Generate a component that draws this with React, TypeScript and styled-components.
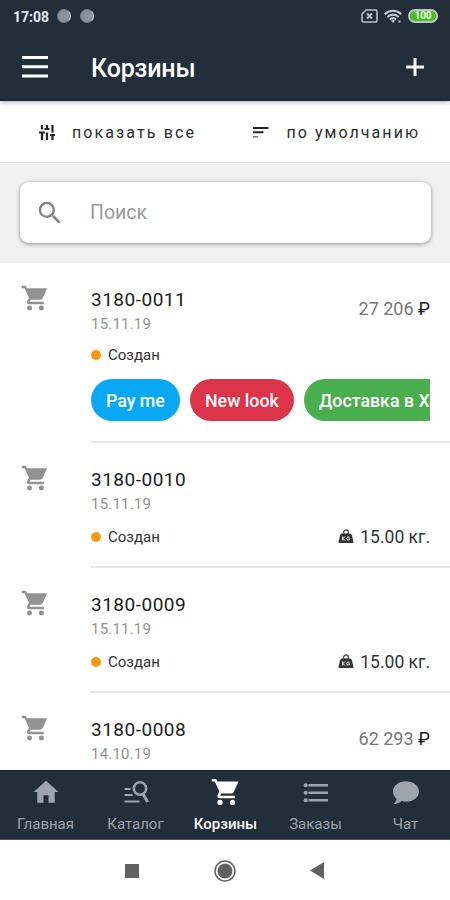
import React from "react";
import styled, { createGlobalStyle } from "styled-components";

const GlobalStyle = createGlobalStyle`
  *, *::before, *::after { box-sizing: border-box; }
  body { margin: 0; background: #fff; font-family: Roboto, "Noto Sans", sans-serif; }
`;

const Screen = styled.div`
  width: 450px;
  height: 900px;
  display: flex;
  flex-direction: column;
  overflow: hidden;
  background: #fff;
`;

const Header = styled.header`
  flex: none;
  height: 101px;
  background: #232e3b;
  border-bottom: 1px solid #12263c;
  box-shadow: 0 1px 5px rgba(0, 0, 0, 0.35);
  z-index: 1;
  color: #fff;
`;

const StatusBar = styled.div`
  height: 32px;
  padding: 0 12px 0 13px;
  display: flex;
  align-items: center;
`;

const Clock = styled.span`
  width: 44px;
  padding-top: 1px;
  font-size: 14px;
  font-weight: 700;
  line-height: 20px;
  color: #e8eaec;
`;

const Notice = styled.span`
  width: 14px;
  height: 14px;
  margin-right: 9px;
  border-radius: 50%;
  background: #8b939b;
  border: 1px solid #6f7881;
  border-right-color: #c6cbcf;
`;

const StatusIcons = styled.div`
  margin-left: auto;
  display: flex;
  align-items: center;
  gap: 6px;
`;

const Battery = styled.span`
  width: 30px;
  height: 14px;
  border: 2px solid #bdc4c3;
  border-radius: 7px;
  background: #48bd20;
  color: #e9ffe2;
  font-size: 10px;
  font-weight: 700;
  line-height: 10px;
  text-align: center;
`;

const AppBar = styled.div`
  height: 70px;
  padding: 0 26px 0 22px;
  display: flex;
  align-items: center;
`;

const Title = styled.h1`
  margin: 0 auto 0 43px;
  font-size: 25px;
  font-weight: 500;
  line-height: 30px;
  letter-spacing: -0.15px;
  padding-top: 4px;
`;

const Filters = styled.div`
  flex: none;
  height: 61px;
  display: flex;
  align-items: center;
  padding: 1px 0 0 38px;
  background: #fff;
`;

const FilterButton = styled.button<{ $width: number; $gap: number; $spacing: number }>`
  width: ${(p) => p.$width}px;
  padding: 0;
  border: 0;
  background: none;
  display: flex;
  align-items: center;
  gap: ${(p) => p.$gap}px;
  font: 400 16px/20px Roboto, sans-serif;
  letter-spacing: ${(p) => p.$spacing}px;
  white-space: nowrap;
  color: #2c2c2c;
`;

const FilterLabel = styled.span`
  padding-top: 2px;
`;

const SearchPanel = styled.div`
  flex: none;
  height: 101px;
  padding: 19px 19px 20px 20px;
  background: #f0f0f0;
  border-top: 1px solid #e5e5e5;
`;

const SearchBox = styled.label`
  height: 61px;
  padding-left: 15px;
  display: flex;
  align-items: center;
  gap: 25px;
  border-radius: 9px;
  background: #fff;
  box-shadow: 0 1px 4px rgba(0, 0, 0, 0.4);
  font-size: 19.5px;
  color: #999;
`;

const List = styled.main`
  flex: 1;
  min-height: 0;
  overflow: hidden;
`;

const Row = styled.article<{ $tall?: boolean }>`
  height: ${(p) => (p.$tall ? 180 : 125)}px;
  display: grid;
  grid-template-columns: 70px 1fr;
  padding-left: 21px;
`;

const CartSlot = styled.div`
  padding-top: 21px;
  line-height: 0;
  color: #929292;
`;

const RowBody = styled.div`
  min-width: 0;
  padding-right: 20px;
  border-bottom: 2px solid #e6e6e6;
`;

const Heading = styled.div`
  height: 81px;
  padding-top: 24px;
  display: flex;
  justify-content: space-between;
`;

const Code = styled.div`
  font-size: 19px;
  line-height: 25px;
  letter-spacing: 0.5px;
  color: #1c1c1c;
`;

const DateText = styled.div`
  font-size: 15px;
  line-height: 20px;
  margin-top: 2px;
  letter-spacing: 0.2px;
  color: #929292;
`;

const Price = styled.div`
  padding-top: 10px;
  font-size: 18px;
  line-height: 24px;
  color: #777;
`;

const Ruble = styled.span`
  color: #1c1c1c;
`;

const Meta = styled.div<{ $drop?: boolean }>`
  height: 22px;
  margin-top: ${(p) => (p.$drop ? 1.5 : 0)}px;
  display: flex;
  align-items: center;
  font-size: 15px;
  color: #333;
`;

const Dot = styled.span`
  width: 10px;
  height: 10px;
  margin-right: 7px;
  border-radius: 50%;
  background: #ff9810;
`;

const Weight = styled.span`
  margin-left: auto;
  display: flex;
  align-items: center;
  gap: 6px;
  font-size: 17.5px;
  line-height: 20px;
`;

const Chips = styled.div`
  margin-top: 13px;
  display: flex;
  gap: 10px;
  overflow: hidden;
`;

const Chip = styled.span<{ $color: string; $width: number }>`
  flex: none;
  width: ${(p) => p.$width}px;
  height: 42px;
  padding-left: 15px;
  border-radius: 21px;
  background: ${(p) => p.$color};
  color: #fff;
  font-size: 17.8px;
  font-weight: 500;
  line-height: 43px;
  white-space: nowrap;
`;

const Tabs = styled.nav`
  flex: none;
  height: 70px;
  display: grid;
  grid-template-columns: repeat(5, 1fr);
  background: #232e3b;
  border-top: 1px solid #142438;
  border-bottom: 1px solid #465361;
`;

const Tab = styled.a<{ $active?: boolean }>`
  display: flex;
  flex-direction: column;
  align-items: center;
  padding: 6px 0 0 1px;
  gap: 7px;
  font-size: 15px;
  font-weight: ${(p) => (p.$active ? 500 : 400)};
  line-height: 20px;
  color: ${(p) => (p.$active ? "#fff" : "#9da4ab")};
`;

const SystemBar = styled.footer`
  flex: none;
  height: 60px;
  padding: 1px 0 0 125px;
  display: flex;
  align-items: center;
  background: #fff;
`;

const HomeKey = styled.svg`
  margin: 0 74px 0 75px;
`;

function CartIcon({ size = 28.5 }: { size?: number }) {
  return (
    <svg width={size} height={size} viewBox="0 0 24 24" fill="currentColor">
      <path d="M.6 1.500h3.500l1 2.100H22L18.200 12q-.6 1.200-1.900 1.200H8.200L7.300 15H19.200v2H7q-2.800-.3-1.600-3l1.300-2.400L3 3.500H.6z" />
      <circle cx="7.200" cy="20.300" r="2.100" />
      <circle cx="17.200" cy="20.300" r="2.100" />
    </svg>
  );
}

function SimIcon() {
  return (
    <svg width="17" height="14" viewBox="0 0 17 14" fill="none" stroke="#b9bfc5">
      <path d="M5 1h9.500q1.500 0 1.500 1.500v9q0 1.500-1.500 1.500h-12Q1 13 1 11.500V5z" strokeWidth="1.600" />
      <path d="m6 4.500 5 5m0-5-5 5" strokeWidth="2" />
    </svg>
  );
}

function WifiIcon() {
  return (
    <svg width="18" height="15" viewBox="0 0 18 15" fill="none" stroke="#c4c9ce" strokeWidth="2.200">
      <path d="M.8 5.200C5.500.6 12.500.6 17.200 5.200M3.300 8c3.300-3.100 8.100-3.100 11.400 0M5.900 10.600c1.800-1.700 4.400-1.700 6.200 0" />
      <path d="m9 14-2-2.300q2-1.500 4 0zM14.500 11.500h2v2h-2z" fill="#c4c9ce" stroke="none" />
    </svg>
  );
}

function TuneIcon() {
  return (
    <svg width="18" height="17" viewBox="0 0 18 17" fill="none" stroke="#222" strokeWidth="2.200">
      <path d="M4 1v4.500M4 8v8M9 1v4M9 8.500V16M14.500 1v7.500M14.500 11v5" />
      <path d="M1 8.500h6M6.500 5h5M12 11h5" strokeWidth="2" />
    </svg>
  );
}

function SortIcon() {
  return (
    <svg width="17" height="13" viewBox="0 0 17 13">
      <path d="M0 1h15.500v2H0zM0 5.300h10.500v2H0z" fill="#222" />
      <path d="M0 10h5v1.500H0z" fill="#777" />
    </svg>
  );
}

function WeightIcon() {
  return (
    <svg width="16" height="15" viewBox="0 0 16 15">
      <circle cx="8" cy="3.400" r="2.400" fill="none" stroke="#555" strokeWidth="1.400" />
      <path d="M4 4.600h8q1.300 0 1.900 1.600l1.500 6.300q.2 1.500-.8 1.500H1.400q-1 0-.8-1.500l1.500-6.300Q2.700 4.600 4 4.600z" fill="#333" />
      <path d="M4.700 7.500v4M7 7.500l-2 2 2 2M11.500 8.200q-2.700-1-2.700 1.300t2.700 1.400V9.800h-1" fill="none" stroke="#fff" strokeWidth="1" />
    </svg>
  );
}

interface Cart {
  code: string;
  date: string;
  status?: string;
  price?: string;
  weight?: string;
  tags?: { label: string; color: string; width: number }[];
}

const carts: Cart[] = [
  {
    code: "3180-0011",
    date: "15.11.19",
    status: "Создан",
    price: "27 206",
    tags: [
      { label: "Pay me", color: "#08a8f4", width: 89 },
      { label: "New look", color: "#dc3448", width: 104 },
      { label: "Доставка в Хо", color: "#49ae4e", width: 160 },
    ],
  },
  { code: "3180-0010", date: "15.11.19", status: "Создан", weight: "15.00 кг." },
  { code: "3180-0009", date: "15.11.19", status: "Создан", weight: "15.00 кг." },
  { code: "3180-0008", date: "14.10.19", price: "62 293" },
];

function CartRow({ cart }: { cart: Cart }) {
  return (
    <Row $tall={!!cart.tags}>
      <CartSlot><CartIcon /></CartSlot>
      <RowBody>
        <Heading>
          <div>
            <Code>{cart.code}</Code>
            <DateText>{cart.date}</DateText>
          </div>
          {cart.price && <Price>{cart.price} <Ruble>₽</Ruble></Price>}
        </Heading>
        {cart.status && (
          <Meta $drop={!cart.tags}>
            <Dot />
            {cart.status}
            {cart.weight && <Weight><WeightIcon />{cart.weight}</Weight>}
          </Meta>
        )}
        {cart.tags && (
          <Chips>
            {cart.tags.map((tag) => (
              <Chip key={tag.label} $color={tag.color} $width={tag.width}>{tag.label}</Chip>
            ))}
          </Chips>
        )}
      </RowBody>
    </Row>
  );
}

export default function App() {
  return (
    <>
      <GlobalStyle />
      <Screen>
        <Header>
          <StatusBar>
            <Clock>17:08</Clock>
            <Notice />
            <Notice />
            <StatusIcons><SimIcon /><WifiIcon /><Battery>100</Battery></StatusIcons>
          </StatusBar>
          <AppBar>
            <svg width="26" height="22" viewBox="0 0 26 22" fill="#fff">
              <path d="M0 0h26v3H0zM0 9.200h26v3H0zM0 18.400h26v3H0z" />
            </svg>
            <Title>Корзины</Title>
            <svg width="18" height="18" viewBox="0 0 18 18" fill="#fff">
              <path d="M7.500 0h3v7.500H18v3h-7.500V18h-3v-7.500H0v-3h7.500z" />
            </svg>
          </AppBar>
        </Header>
        <Filters>
          <FilterButton $width={214.5} $gap={16} $spacing={2.1}>
            <TuneIcon /><FilterLabel>показать все</FilterLabel>
          </FilterButton>
          <FilterButton $width={190} $gap={17} $spacing={2.05}>
            <SortIcon /><FilterLabel>по умолчанию</FilterLabel>
          </FilterButton>
        </Filters>
        <SearchPanel>
          <SearchBox>
            <svg width="30" height="30" viewBox="0 0 24 24" fill="#858585">
              <path d="M15.500 14h-.79l-.28-.27A6.471 6.471 0 0 0 16 9.500 6.500 6.500 0 1 0 9.500 16c1.610 0 3.090-.59 4.230-1.570l.27.28v.79l5 4.990L20.490 19l-4.990-5zm-6 0C7.010 14 5 11.990 5 9.500S7.010 5 9.500 5 14 7.010 14 9.500 11.990 14 9.500 14z" />
            </svg>
            Поиск
          </SearchBox>
        </SearchPanel>
        <List>
          {carts.map((cart) => <CartRow key={cart.code} cart={cart} />)}
        </List>
        <Tabs>
          <Tab>
            <svg width="30" height="30" viewBox="0 0 24 24" fill="currentColor"><path d="M10 20.500v-6h4v6h5v-8.500h3L12 3 2 12h3v8.500z" /></svg>
            Главная
          </Tab>
          <Tab>
            <svg width="30" height="30" viewBox="0 0 30 30" fill="none" stroke="currentColor" strokeWidth="2.500">
              <circle cx="19" cy="11.500" r="6.200" />
              <path d="m22 17 4.700 8" strokeWidth="3" />
              <path d="M3.500 12h6M3.500 18h8M3.500 24.500h15" strokeWidth="2.200" />
            </svg>
            Каталог
          </Tab>
          <Tab $active><CartIcon size={30} />Корзины</Tab>
          <Tab>
            <svg width="30" height="30" viewBox="0 0 30 30" fill="currentColor">
              <path d="M7.500 7H27v2.500H7.500zM7.500 14.500H27V17H7.500zM7.500 22H27v2.500H7.500z" />
              <circle cx="4.700" cy="8.200" r="2" /><circle cx="4.700" cy="15.700" r="2" /><circle cx="4.700" cy="23.200" r="2" />
            </svg>
            Заказы
          </Tab>
          <Tab>
            <svg width="30" height="30" viewBox="0 0 30 30" fill="currentColor">
              <path d="M15 4.200c7.400 0 13 4.400 13 10.200S22.400 24.600 15 24.600c-1.500 0-3-.2-4.400-.6-2 1.700-4.600 3-8.200 3.200 1.800-1.600 3-3.600 3.300-5.400C3.400 20 2 17.300 2 14.400 2 8.600 7.600 4.200 15 4.200z" />
            </svg>
            Чат
          </Tab>
        </Tabs>
        <SystemBar>
          <svg width="14" height="14"><rect width="14" height="14" fill="#626262" /></svg>
          <HomeKey width="22" height="22" viewBox="0 0 22 22">
            <circle cx="11" cy="11" r="10" fill="none" stroke="#626262" strokeWidth="1.500" />
            <circle cx="11" cy="11" r="7.500" fill="#626262" />
          </HomeKey>
          <svg width="15" height="17" viewBox="0 0 15 17"><path d="M0 8.500 14 0v17z" fill="#626262" /></svg>
        </SystemBar>
      </Screen>
    </>
  );
}
